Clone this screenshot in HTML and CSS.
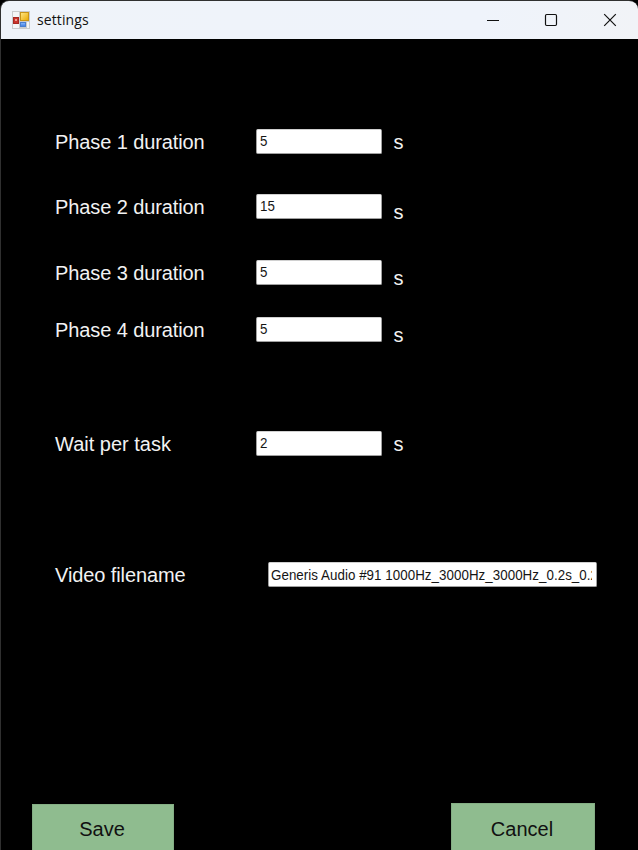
FILE: index.html
```html
<!DOCTYPE html>
<html lang="en">
<head>
<meta charset="utf-8">
<title>settings</title>
<link rel="stylesheet" href="styles.css">
</head>
<body>
<div class="window">
  <header class="titlebar">
    <svg class="app-icon" width="18" height="18" viewBox="0 0 18 18">
      <defs>
        <linearGradient id="gold" x1="0" y1="0" x2="1" y2="1"><stop offset="0" stop-color="#ffe889"/><stop offset="1" stop-color="#e9a800"/></linearGradient>
        <linearGradient id="blue" x1="0" y1="0" x2="0" y2="1"><stop offset="0" stop-color="#8dbcff"/><stop offset="1" stop-color="#3c7be0"/></linearGradient>
      </defs>
      <rect width="18" height="18" fill="#c9cbcd"/>
      <path d="M1 1h6v5H1zM1 13h6v4H1zM15 11h2v6h-2z" fill="#f4f5f6"/>
      <rect x="8.5" y="1.500" width="8" height="8" fill="url(#gold)" stroke="#c99518"/>
      <rect x="1.500" y="6.500" width="5" height="6" fill="#c9342c" stroke="#a82820"/>
      <rect x="3" y="8" width="2" height="2" fill="#ef9c90"/>
      <rect x="8.500" y="11.500" width="5" height="4" fill="url(#blue)" stroke="#4a7fd0"/>
    </svg>
    <h1 class="title">settings</h1>
    <div class="controls">
      <svg width="14" height="14" viewBox="0 0 14 14"><path d="M1 7.500h12"/></svg>
      <svg width="14" height="14" viewBox="0 0 14 14"><rect x="1.500" y="1.500" width="11" height="11" rx="1.200"/></svg>
      <svg width="14" height="14" viewBox="0 0 14 14"><path d="M1.200 1.200l11.600 11.600M12.800 1.200L1.200 12.800"/></svg>
    </div>
  </header>
  <main class="form">
    <div class="row"><span class="label">Phase 1 duration</span><div class="field"><div class="value">5</div></div><span class="unit">s</span></div>
    <div class="row phase2"><span class="label">Phase 2 duration</span><div class="field"><div class="value">15</div></div><span class="unit low">s</span></div>
    <div class="row phase3"><span class="label">Phase 3 duration</span><div class="field"><div class="value">5</div></div><span class="unit low">s</span></div>
    <div class="row phase4"><span class="label">Phase 4 duration</span><div class="field"><div class="value">5</div></div><span class="unit low">s</span></div>
    <div class="row wait"><span class="label">Wait per task</span><div class="field"><div class="value">2</div></div><span class="unit">s</span></div>
    <div class="row video"><span class="label">Video filename</span><div class="field"><div class="value">Generis Audio #91 1000Hz_3000Hz_3000Hz_0.2s_0.2</div></div></div>
    <div class="actions"><button class="save">Save</button><button class="cancel">Cancel</button></div>
  </main>
</div>
</body>
</html>
```
FILE: styles.css
```css
* { box-sizing: border-box; }
body { margin: 0; background: #000; overflow: hidden; }
.window {
  height: 850px;
  border-top: 1px solid #303030;
  border-left: 1px solid #303030;
  border-radius: 9px 9px 0 0;
  overflow: hidden;
  font-family: "Liberation Sans", Arial, sans-serif;
}
.titlebar {
  display: flex;
  align-items: center;
  height: 38px;
  padding-left: 11px;
  background: linear-gradient(90deg, #eff3f9, #eff3fb 75%, #f1f3f7);
}
.title {
  margin: 0 0 0 7px;
  font: 400 14px/20px "Open Sans", sans-serif;
  letter-spacing: 0.1px;
  color: #111;
}
.controls {
  display: flex;
  gap: 44px;
  margin-left: auto;
  padding-right: 21px;
}
.controls svg { fill: none; stroke: #111; stroke-width: 1.200; }
.controls svg:nth-child(2) { margin-right: 1px; }
.form { padding-top: 90px; color: #f2f2f2; }
.row {
  display: flex;
  height: 25px;
  padding-left: 54px;
  font-size: 20px;
  line-height: 26px;
}
.label { width: 201px; white-space: nowrap; letter-spacing: -0.100px; }
.field {
  width: 125.500px;
  height: 25px;
  padding-left: 3px;
  border: 1px solid #a0a0a0;
  border-top-color: #d0d0d0;
  border-radius: 2px;
  background: #fff;
  color: #151515;
  font-size: 14.500px;
  line-height: 23px;
  white-space: nowrap;
}
.value {
  overflow: hidden;
  transform: scaleX(0.920);
  transform-origin: 0 0;
}
.unit { margin-left: 12px; }
.low { padding-top: 5px; }
.phase2 { margin-top: 40px; }
.phase3 { margin-top: 41px; }
.phase4 { margin-top: 32px; }
.wait { margin-top: 89px; }
.wait .label { letter-spacing: 0; }
.video { margin-top: 106px; }
.video .label { width: 213px; }
.video .field { width: 329px; padding-left: 2px; line-height: 25px; }
.video .value { width: 349px; letter-spacing: 0.050px; }
.actions {
  display: flex;
  justify-content: space-between;
  align-items: flex-start;
  margin-top: 216px;
  padding: 0 43px 0 31px;
}
.actions button {
  padding: 0 2px 0 0;
  border: 1px solid #84ae84;
  background: #8fbc8f;
  color: #111;
  font: 20px "Liberation Sans", Arial, sans-serif;
}
.save { width: 142px; height: 51px; margin-top: 1px; }
.cancel { width: 144px; height: 53px; }
```
